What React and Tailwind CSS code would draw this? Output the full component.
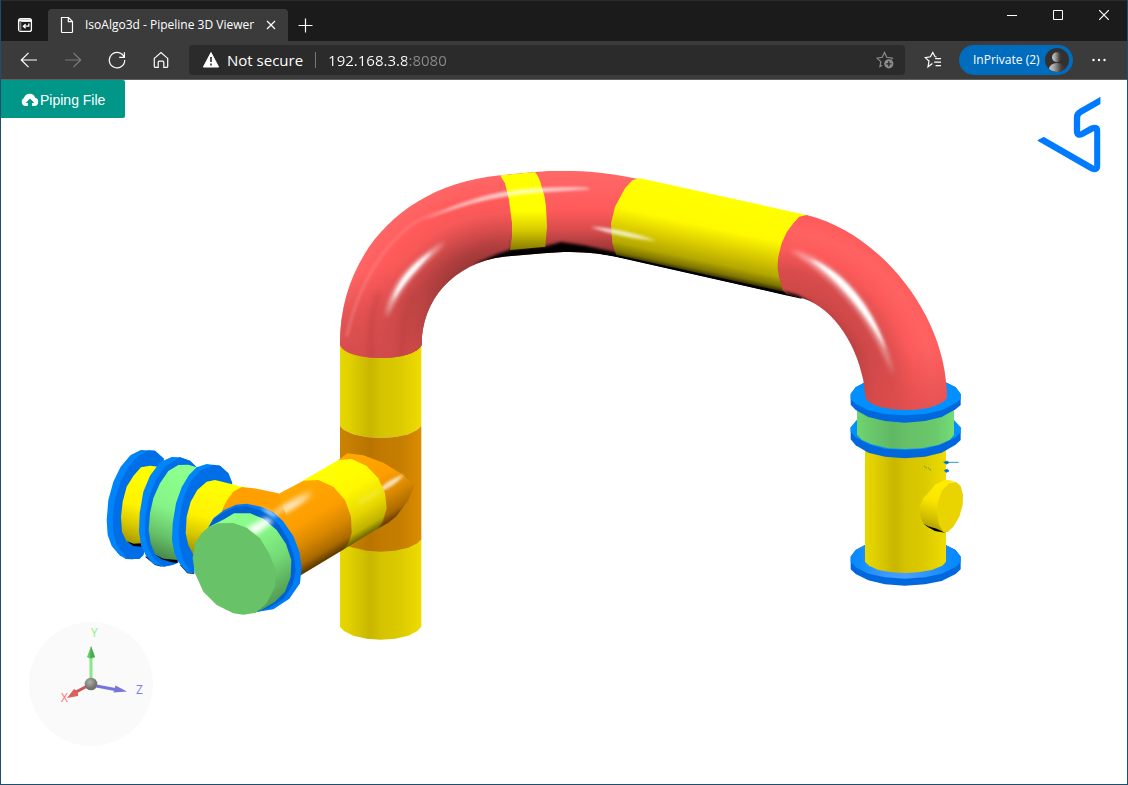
import React from "react";

const Stops = ({ list }) =>
  list.map(([offset, color, opacity]) => (
    <stop key={offset} offset={offset} stopColor={color} stopOpacity={opacity ?? 1} />
  ));

const yellowPipe = [
  [0, "#e6d800"],
  [0.12, "#e0d000"],
  [0.37, "#c8b600"],
  [0.5, "#d4c300"],
  [0.75, "#dccb00"],
  [1, "#f0dc00"],
];
const orangePipe = [
  [0, "#cc8400"],
  [0.37, "#b87400"],
  [0.5, "#c17900"],
  [0.75, "#c67e00"],
  [1, "#dc8c00"],
];

const IconButton = ({ label, children, color = "text-white" }) => (
  <button aria-label={label} className={`flex h-8 w-11 shrink-0 items-center justify-center ${color}`}>
    {children}
  </button>
);

const Line = ({ size = 18, width = 1.2, d, children }) => (
  <svg width={size} height={size} viewBox={`0 0 ${size} ${size}`} fill="none" stroke="currentColor" strokeWidth={width} aria-hidden="true">
    {d && <path d={d} />}
    {children}
  </svg>
);

const TabBar = () => (
  <div className="flex h-[41px] items-end border-t border-[#2b2b2b] bg-[#1b1b1b] text-white">
    <button aria-label="Tab actions" className="flex h-8 w-[47px] items-center justify-center">
      <Line size={16} width={1.3}>
        <rect x="1.6" y="1.6" width="12.8" height="12.8" rx="2" />
        <path d="M1.6 3.6h12.8" strokeWidth="2.6" />
        <path d="M3.4 4v10" strokeWidth="2" stroke="#777" />
        <path d="M11.8 6.4v2.8H6.6M8.6 7.2 6.4 9.2l2.2 2" />
      </Line>
    </button>
    <div className="flex h-8 w-60 items-center rounded-t bg-[#3b3b3b] pr-2 pl-2.5">
      <Line size={18}>
        <path d="M3.5 1.5h7l4 4v10.2a.8.8 0 0 1-.8.8H4.3a.8.8 0 0 1-.8-.8zM10.3 1.7v4h4" />
      </Line>
      <span className="ml-[9px] flex-1 text-xs whitespace-nowrap">IsoAlgo3d - Pipeline 3D Viewer</span>
      <button aria-label="Close tab" className="flex size-[18px] items-center justify-center">
        <Line size={10} width={1.2} d="M1 1l8 8M9 1L1 9" />
      </button>
    </div>
    <button aria-label="New tab" className="flex h-8 w-[35px] items-center justify-center">
      <Line size={15} d="M7.5.5v14M.5 7.5h14" />
    </button>
    <div className="ml-auto flex self-start">
      <button aria-label="Minimize" className="flex h-7 w-[46px] items-center justify-center">
        <Line size={10} width={1} d="M0 5.5h10" />
      </button>
      <button aria-label="Maximize" className="flex h-7 w-[46px] items-center justify-center">
        <Line size={10} width={1} d="M.5.5h9v9h-9z" />
      </button>
      <button aria-label="Close" className="flex h-7 w-[46px] items-center justify-center">
        <Line size={10} d="M0 0l10 10M10 0L0 10" />
      </button>
    </div>
  </div>
);

const Toolbar = () => (
  <div className="flex h-[39px] items-center border-b border-[#606060] bg-[#3b3b3b] px-1.5">
    <IconButton label="Back">
      <Line d="M17 9H1.5M8.5 1.8 1.3 9l7.2 7.2" />
    </IconButton>
    <IconButton label="Forward" color="text-[#7b7b7b]">
      <Line d="M1 9h15.5M9.5 1.8 16.7 9l-7.2 7.2" />
    </IconButton>
    <IconButton label="Refresh">
      <Line d="M16.2 6.4A7.7 7.7 0 1 0 16.7 9M16.4 1.2v5.2h-5.2" />
    </IconButton>
    <IconButton label="Home">
      <Line d="M2.3 7.4 9 1.6l6.7 5.8v8.2a.8.8 0 0 1-.8.8h-3.1v-5.2a1 1 0 0 0-1-1H7.2a1 1 0 0 0-1 1v5.2H3.1a.8.8 0 0 1-.8-.8z" />
    </IconButton>
    <div className="mr-1.5 ml-1.5 flex h-[30px] min-w-0 flex-1 items-center rounded bg-[#2b2b2b] pr-[11px] pl-3.5 text-base text-white">
      <svg width="16" height="16" viewBox="0 0 16 16" className="shrink-0" aria-hidden="true">
        <path d="M8 .6 15.6 15H.4z" fill="#fff" stroke="#fff" strokeLinejoin="round" />
        <path d="M8 5v5M8 11.5v2" stroke="#2b2b2b" strokeWidth="1.6" />
      </svg>
      <span className="ml-2 text-[15px] whitespace-nowrap">Not secure</span>
      <span className="mx-3 h-4 w-px bg-[#777]" />
      <input
        aria-label="Address"
        defaultValue="192.168.3.8:8080"
        className="min-w-0 flex-1 bg-linear-[90deg,#fff_79px,#8a8a8a_79px] bg-clip-text text-[15px] text-transparent outline-none"
      />
      <button aria-label="Add to favorites" className="text-[#8c8c8c]">
        <svg width="18" height="18" viewBox="0 0 18 18" fill="none" stroke="currentColor" aria-hidden="true">
          <path d="M6.2 14.2 4 15.6l.8-5L1 7.1l5.2-.8L8.5 1.5l2.3 4.8 5.6.8-1 1.2" strokeWidth="1.2" />
          <circle cx="12.8" cy="12.8" r="4.6" fill="currentColor" stroke="none" />
          <path d="M12.8 10.2v5.2M10.2 12.8h5.2" stroke="#2b2b2b" strokeWidth="1.3" />
        </svg>
      </button>
    </div>
    <IconButton label="Favorites">
      <Line d="M8.4 12.6 4 15.8l1-5.8L1.2 6.6l5.2-.8L8.8 1.4l2.3 4.4 1.5.2M11.2 7.7H17M10.2 11.2H17M11.6 14.7H17" />
    </IconButton>
    <button className="mx-1 flex h-[30px] w-[114px] shrink-0 items-center justify-between rounded-full bg-[#006cbe] pr-1 pl-3.5 text-xs whitespace-nowrap text-white">
      InPrivate (2)
      <svg width="24" height="24" viewBox="0 0 24 24" aria-hidden="true">
        <defs>
          <linearGradient id="avatar">
            <Stops list={[[0, "#c8c6c4"], [0.3, "#a8a6a4"], [0.75, "#44423f"], [1, "#323130"]]} />
          </linearGradient>
        </defs>
        <circle cx="12" cy="12" r="12" fill="#323130" />
        <circle cx="12" cy="9.2" r="5" fill="url(#avatar)" />
        <path d="M4 20.9a8 6 0 0 1 16 0A12 12 0 0 1 4 20.9z" fill="url(#avatar)" />
      </svg>
    </button>
    <IconButton label="Settings and more">
      <svg width="14" height="4" viewBox="0 0 14 4" fill="currentColor" aria-hidden="true">
        <circle cx="1.5" cy="2" r="1.2" />
        <circle cx="7" cy="2" r="1.2" />
        <circle cx="12.5" cy="2" r="1.2" />
      </svg>
    </IconButton>
  </div>
);

const Riser = () => (
  <g transform="translate(320 330) scale(.33333)">
    <path d="M60 30V288L72 300 100 313 140 321 182 324 225 321 265 313 292 299 304 288V30z" fill="url(#riserYellow)" />
    <path d="M60 650V890L72 903 100 917 140 926 182 929 225 926 265 917 292 903 304 890V620z" fill="url(#riserYellow)" />
    <path d="M60 288L72 300 100 313 140 321 182 324 225 321 265 313 292 299 304 288V628L292 640 265 653 225 662 182 665 140 662 100 653 72 645 60 635z" fill="url(#riserOrange)" />
  </g>
);

// red elbow on the riser, the short yellow spool and the next elbow
const LeftBend = () => (
  <g transform="translate(330 160) scale(.33333)">
    <clipPath id="bendClip">
      <path d="M30 555C28 290 210 75 510 46L615 36C720 26 830 36 930 58L890 120 862 285 900 298C830 282 780 276 700 276L640 280 520 290C370 310 275 420 275 555 262 580 210 595 152 594 90 593 40 580 30 555z" />
    </clipPath>
    <g clipPath="url(#bendClip)">
      <rect x="20" y="20" width="520" height="600" fill="url(#torusLeft)" />
      <rect x="20" y="20" width="520" height="600" fill="url(#torusFade)" />
      <path d="M535 20H950V320H535z" fill="url(#redTop)" />
      <path d="M145 400C125 460 115 520 125 600M250 400C220 460 215 520 215 600" stroke="#b63c3c" strokeWidth="16" fill="none" opacity=".4" filter="url(#blur8)" />
      <path d="M168 475C180 390 215 320 345 245C280 315 225 350 168 475z" fill="#fff" opacity=".7" filter="url(#blur8)" />
      <path d="M190 420C200 375 235 320 305 275C265 325 228 355 190 420z" fill="#fff" filter="url(#blur5)" />
      <path d="M50 530Q80 390 160 280T350 150Q440 108 530 98" stroke="#ff9c9c" strokeWidth="8" fill="none" opacity=".4" filter="url(#blur5)" />
      <path d="M430 316Q490 284 545 268L650 258 693 246 760 256 870 280 905 300 700 290 500 300z" fill="#000" filter="url(#blur5)" />
      <path d="M510 46L615 36Q629 52 635 80 646 110 648 140L651 200 646 260 540 270 546 230 546 190 537 120 525 70z" fill="url(#bandYellow)" />
      <path d="M280 180Q460 92 620 85T780 88Q700 92 600 100Q440 114 280 180z" fill="#fff" opacity=".7" filter="url(#blur5)" />
    </g>
  </g>
);

const RightBend = () => (
  <g transform="translate(600 160) scale(.33333)">
    <path d="M120 55L620 165 590 350 600 413 550 403 50 290 37 250 33 190 45 140 75 85 98 60z" fill="url(#longYellow)" />
    <path d="M-10 277L50 285 550 395 605 410V416L550 404 50 291-10 280z" fill="#000" />
    <path d="M-28 201Q60 202 170 243Q50 230-28 201z" fill="#fff" opacity=".75" filter="url(#blur5)" />
    <clipPath id="elbowClip">
      <path d="M620 165C830 215 1030 450 1040 690L1041 714C1020 740 970 750 915 750 860 748 810 738 797 714L790 660C765 540 690 430 590 410L560 402 548 390 537 350 532 320 535 290 545 250 560 217 580 190 598 170z" />
    </clipPath>
    <g clipPath="url(#elbowClip)">
      <rect x="520" y="150" width="540" height="610" fill="url(#torusRight)" />
      <rect x="520" y="150" width="540" height="610" fill="url(#torusFadeRight)" />
      <path d="M570 270C700 295 835 425 882 650C815 480 710 360 570 270z" fill="#fff" opacity=".5" filter="url(#blur8)" />
      <path d="M630 298C715 325 815 430 858 570C800 460 715 362 630 298z" fill="#fff" filter="url(#blur5)" />
      <path d="M545 392L590 404 640 430 600 430z" fill="#000" filter="url(#blur5)" />
    </g>
  </g>
);

const Valve = () => (
  <g transform="translate(835 370) scale(.33333)">
    <path d="M47 560L62 540 90 525H332L362 540 377 560V598L362 612 320 633 270 643 210 647 150 643 100 631 62 612 47 598z" fill="#0068dc" />
    <path d="M47 575V560L62 540 90 525H332L362 540 377 560V577L362 591 320 611 270 622 210 626 150 622 100 611 62 592z" fill="url(#flangeShine)" />
    <path d="M90 230H333V575L322 587 290 600 250 607 212 609 170 607 130 600 102 587 90 575z" fill="url(#valveYellow)" />
    <path d="M47 175L65 152H357L377 175V210L362 224 320 248 270 260 210 265 150 260 100 248 62 226 47 208z" fill="#0068dc" />
    <path d="M47 185V172L65 150H357L377 172V187L362 202 320 223 270 236 210 240 150 236 100 223 62 202z" fill="#0090ff" />
    <path d="M66 110H357V195L345 209 310 225 260 235 210 237 160 235 110 223 80 209 66 194z" fill="url(#valveGreen)" />
    <path d="M47 72L62 52 90 37H332L362 52 377 72V105L362 118 320 141 270 153 210 158 150 153 100 141 62 120 47 104z" fill="#0068dc" />
    <path d="M47 88V72L62 52 90 37H332L362 52 377 72V88L362 99 320 121 270 132 210 136 150 132 100 121 62 101z" fill="#0090ff" />
    <path d="M330 330L300 344 283 365 265 385 256 405 254 430 262 455 280 470 300 482 330 488 345 400z" fill="url(#nozzle)" />
    <path d="M264 460L280 469 305 476 330 488 300 483 278 471z" fill="#000" />
    <path d="M363 336L377 348 384 375 383 405 373 440 355 470 338 486 326 487 312 465 306 430 309 395 322 360 340 340z" fill="#e9d300" />
    <path d="M330 330L345 331 363 337 345 338 322 360 308 345z" fill="#ffea00" />
    <g strokeWidth="3" fill="none">
      <path d="M315 271L328 276M317 298L330 302" stroke="#d0e000" strokeWidth="5" />
      <path d="M325 277H371" stroke="#2a9fb0" />
      <path d="M327 277L336 273 342 278 334 282zM328 302L336 298 342 303 334 307z" fill="#0060d0" stroke="#1582b8" />
      <path d="M268 289L275 294M280 294L288 301" stroke="#33733c" strokeDasharray="4 2" />
    </g>
  </g>
);

const Branch = () => (
  <g transform="translate(270 440) scale(.33333)">
    <path d="M205 60L232 40 280 46 340 68 400 105 425 130 432 140 415 180 380 228 355 248 320 268z" fill="url(#branchOrange)" />
    <path d="M315 162Q345 122 402 103Q380 138 315 162z" fill="#fff" opacity=".75" filter="url(#blur5)" />
    <path d="M98 122L205 60 245 57 290 78 325 115 345 160 350 205 338 245 325 265 222 328z" fill="url(#branchYellow)" />
    <path d="M-85 145L25 162 100 122 145 120 190 140 225 180 243 230 245 280 235 310 222 328 90 407 0 350-100 230z" fill="url(#branchOrange)" />
    <path d="M0 243Q40 195 130 162Q75 208 0 243z" fill="#fff" opacity=".8" filter="url(#blur8)" />
    <path d="M265 190L330 150" stroke="#fff8a0" strokeWidth="10" opacity=".4" filter="url(#blur8)" />
  </g>
);

const FlangeStack = () => (
  <g transform="translate(100 430) scale(.33333)">
    <path d="M50 365L78 387 100 388 80 350z" fill="#000" />
    <path d="M122 60L165 62 190 85 195 120 130 375 118 387H80L60 377 35 348 23 315 20 270 25 210 40 155 62 110 92 75z" fill="#0084fa" />
    <path d="M145 61L165 62 190 85 195 120 130 375 118 387H85L70 372 50 345 40 305 38 260 46 205 62 155 85 112 115 78z" fill="#006ee6" />
    <path d="M150 107L123 112 100 138 80 170 68 215 63 260 66 305 80 335 125 348 190 120 175 110z" fill="url(#stubYellow)" />
    <path d="M80 333L100 341 125 340V350L100 348z" fill="#000" />
    <path d="M135 380L165 405 185 410 170 375z" fill="#000" />
    <path d="M215 81L240 82 270 92 290 112 235 395 220 404 190 410 160 402 138 378 123 345 117 305 119 250 130 185 150 137 180 97z" fill="#0084fa" />
    <path d="M240 82L270 92 290 112 235 398 220 404 190 410 165 390 145 358 135 315 136 260 146 205 168 150 195 110z" fill="#006ee6" />
    <path d="M290 112L265 104 235 105 205 123 180 160 160 205 150 250 146 300 152 340 165 372 185 384 230 392z" fill="url(#stubGreen)" />
    <path d="M165 374L190 386 232 390V399L215 397 185 388z" fill="#000" />
    <path d="M240 405L262 430 283 432 265 400z" fill="#000" />
    <path d="M320 102L360 107 385 130 397 160 283 350V430L262 428 240 403 224 372 216 330 218 280 228 220 245 172 267 135 290 112z" fill="#0084fa" />
    <path d="M340 104L360 107 385 130 397 160 283 350V430L268 422 250 390 240 355 236 310 240 255 252 200 273 153 300 122z" fill="#006ee6" />
    <path d="M430 171L345 150 320 155 292 180 272 215 260 260 257 310 265 345 280 374 380 280z" fill="url(#stubYellow)" />
    <path d="M425 171L470 176 535 190 560 260 500 300 365 243 380 212 400 185z" fill="#ffa000" />
    <path d="M520 248Q560 210 640 180Q590 225 520 258z" fill="#fff" opacity=".6" filter="url(#blur8)" />
    <path d="M325 292L340 265 372 240 408 224 440 221 485 231 520 247 548 272 580 318 598 365 605 410 600 460 568 506 520 538 470 546 400 400z" fill="#007cf8" />
    <path d="M325 292L345 264 375 245 408 230 440 229 480 240 512 260 540 288 565 330 581 375 587 420 578 465 550 508 505 535 470 546 400 400z" fill="#0062d0" />
    <path d="M480 233L510 243 536 262 518 258 498 246z" fill="#e6f0ff" opacity=".9" filter="url(#blur5)" />
    <path d="M325 292L372 268 402 250 450 250 490 266 530 300 558 342 574 390 572 440 555 485 525 515 480 542z" fill="url(#capGreen)" />
    <path d="M435 303L450 288 500 262 520 274 470 312z" fill="#fff" opacity=".95" filter="url(#blur8)" />
    <path d="M325 292L355 280 400 279 440 293 480 325 510 375 527 420 525 470 500 520 468 548 430 554 400 550 350 525 310 485 285 430 278 385 285 340 305 310z" fill="#68c268" />
  </g>
);

const Pipeline = () => (
  <svg viewBox="1 80 1126 704" className="block w-full" role="img" aria-label="3D pipeline model">
    <defs>
      <filter id="blur5" x="-50%" y="-100%" width="200%" height="300%"><feGaussianBlur stdDeviation="4" /></filter>
      <filter id="blur8" x="-50%" y="-100%" width="200%" height="300%"><feGaussianBlur stdDeviation="8" /></filter>
      <linearGradient id="riserYellow" gradientUnits="userSpaceOnUse" x1="60" x2="304"><Stops list={yellowPipe} /></linearGradient>
      <linearGradient id="riserOrange" gradientUnits="userSpaceOnUse" x1="60" x2="304"><Stops list={orangePipe} /></linearGradient>
      <linearGradient id="valveYellow"><Stops list={yellowPipe} /></linearGradient>
      <linearGradient id="valveGreen">
        <Stops list={[[0, "#70d470"], [0.37, "#60b764"], [0.5, "#66c068"], [0.8, "#6ac86c"], [1, "#74dc76"]]} />
      </linearGradient>
      <linearGradient id="flangeShine">
        <Stops list={[[0, "#0088ff"], [0.3, "#3a98ff"], [0.5, "#4a9eff"], [0.8, "#1c90ff"], [1, "#0088ff"]]} />
      </linearGradient>
      <radialGradient id="torusLeft" gradientUnits="userSpaceOnUse" cx="530" cy="565" r="525">
        <Stops list={[[0.48, "#6e2626"], [0.55, "#9a3636"], [0.65, "#cc4848"], [0.77, "#f85858"], [0.85, "#ff5a5a"], [1, "#ff6868"]]} />
      </radialGradient>
      <linearGradient id="torusFade" gradientUnits="userSpaceOnUse" x1="120" y1="330" x2="190" y2="590">
        <Stops list={[[0, "#cf4a4a", 0], [0.5, "#cf4a4a", 0.65], [1, "#cf4a4a", 0.95]]} />
      </linearGradient>
      <radialGradient id="torusRight" gradientUnits="userSpaceOnUse" cx="510" cy="700" r="545">
        <Stops list={[[0.5, "#b84040"], [0.58, "#cf4848"], [0.68, "#d84c4c"], [0.8, "#fc5a5a"], [0.9, "#ff6262"], [1, "#ff5a5a"]]} />
      </radialGradient>
      <linearGradient id="torusFadeRight" gradientUnits="userSpaceOnUse" x1="0" y1="560" x2="0" y2="740">
        <Stops list={[[0, "#dc4c4c", 0], [1, "#dc4c4c", 0.7]]} />
      </linearGradient>
      <linearGradient id="redTop" gradientUnits="userSpaceOnUse" x1="0" y1="32" x2="0" y2="270">
        <Stops list={[[0, "#ff6868"], [0.5, "#ff5a5a"], [0.75, "#d84c4c"], [1, "#983636"]]} />
      </linearGradient>
      <linearGradient id="bandYellow" x1="0" x2="0" y1="0" y2="1">
        <Stops list={[[0, "#ffff00"], [0.5, "#ffff00"], [0.75, "#d6c800"], [1, "#857c00"]]} />
      </linearGradient>
      <linearGradient id="longYellow" gradientUnits="userSpaceOnUse" x1="370" y1="110" x2="319" y2="349">
        <Stops list={[[0, "#ffff00"], [0.4, "#fffa00"], [0.62, "#dccd00"], [0.82, "#b4a700"], [0.93, "#7c7300"], [1, "#201c00"]]} />
      </linearGradient>
      <linearGradient id="branchOrange" gradientUnits="userSpaceOnUse" x1="100" y1="122" x2="219" y2="327">
        <Stops list={[[0, "#ffa800"], [0.45, "#fd9e00"], [0.7, "#d88800"], [0.9, "#aa6900"], [1, "#603c00"]]} />
      </linearGradient>
      <linearGradient id="branchYellow" gradientUnits="userSpaceOnUse" x1="100" y1="122" x2="219" y2="327">
        <Stops list={[[0, "#ffff00"], [0.4, "#fff800"], [0.7, "#e8d800"], [0.9, "#c0b200"], [1, "#6c6400"]]} />
      </linearGradient>
      <linearGradient id="stubYellow" x1=".2" x2="0" y1="0" y2="1">
        <Stops list={[[0, "#ffff00"], [0.45, "#fff200"], [0.7, "#d8c800"], [1, "#948800"]]} />
      </linearGradient>
      <linearGradient id="stubGreen" x1=".2" x2="0" y1="0" y2="1">
        <Stops list={[[0, "#8cff8c"], [0.4, "#84f486"], [0.7, "#66c068"], [1, "#3c743e"]]} />
      </linearGradient>
      <linearGradient id="capGreen" x1="0" x2=".6" y1="0" y2="1">
        <Stops list={[[0, "#8cff8c"], [0.4, "#88fa88"], [0.7, "#74da76"], [1, "#54a056"]]} />
      </linearGradient>
      <linearGradient id="nozzle" x1=".3" x2=".1" y1="0" y2="1">
        <Stops list={[[0, "#ffee00"], [0.35, "#fae400"], [0.7, "#d0be00"], [1, "#948800"]]} />
      </linearGradient>
    </defs>
    <Riser />
    <LeftBend />
    <Valve />
    <RightBend />
    <Branch />
    <FlangeStack />
  </svg>
);

const Logo = () => (
  <svg width="66" height="78" viewBox="588 288 198 234" className="absolute top-4 right-[25px]" role="img" aria-label="IsoAlgo">
    <clipPath id="logoClip">
      <path d="M612 410L592 421 600 522H782V288H612z" />
    </clipPath>
    <path
      d="M800 291L722 335Q711 341 711 353V392Q711 409 726 402L755 386Q772 378 772 395V494Q772 513 756 505L580 404"
      fill="none"
      stroke="#007bff"
      strokeWidth="19"
      clipPath="url(#logoClip)"
    />
  </svg>
);

const AxisGizmo = () => (
  <svg width="124" height="124" viewBox="29 622 124 124" className="absolute bottom-[38px] left-7 text-xs" role="img" aria-label="View axes">
    <circle cx="91" cy="684" r="62" fill="#fafafa" />
    <path d="M91 682V656" stroke="#8ce68c" strokeWidth="3" />
    <path d="M91 646L87 657Q91 660 95 657z" fill="#5fd065" />
    <path d="M91 646L90 658 95 657z" fill="#4fa857" />
    <path d="M91 685L115 689.5" stroke="#7474dc" strokeWidth="3" />
    <path d="M127 691.5L115.5 685.5 113.5 692.5z" fill="#7676dc" />
    <path d="M91 684L76 692" stroke="#c85858" strokeWidth="3" />
    <path d="M67 698L74 689Q79 691 78 696z" fill="#dc6060" />
    <circle cx="91" cy="684" r="6.3" fill="url(#ball)" />
    <defs>
      <radialGradient id="ball" cx=".4" cy=".35">
        <Stops list={[[0, "#b0b0aa"], [0.6, "#8c8c88"], [1, "#72726e"]]} />
      </radialGradient>
    </defs>
    <text x="91" y="637" fill="#8cf08c">Y</text>
    <text x="61" y="702" fill="#ff7070">X</text>
    <text x="136" y="694" fill="#7c7cf0">Z</text>
  </svg>
);

const App = () => {
  return (
    <div className="flex min-h-screen flex-col border-x border-b border-[#1c4f6e] bg-white font-['Open_Sans','Noto_Sans',sans-serif]">
      <header>
        <TabBar />
        <Toolbar />
      </header>
      <main className="relative flex-1">
        <Pipeline />
        <button className="absolute top-0 left-0 flex h-[38px] items-center gap-px rounded-r-xs bg-[#009688] px-5 pt-0.5 font-['Liberation_Sans',Arial,sans-serif] text-sm whitespace-nowrap text-white">
          <svg width="18" height="16" viewBox="0 0 18 16" aria-hidden="true">
            <path d="M4.8 14A4.2 4.2 0 0 1 3 6.1 5.8 5.8 0 0 1 14.2 5.8 4.2 4.2 0 0 1 13.6 14h-2.5v-3h2.2L9 6.5 4.7 11h2.2v3z" fill="#fff" />
          </svg>
          Piping File
        </button>
        <Logo />
        <AxisGizmo />
      </main>
    </div>
  );
};

export default App;
